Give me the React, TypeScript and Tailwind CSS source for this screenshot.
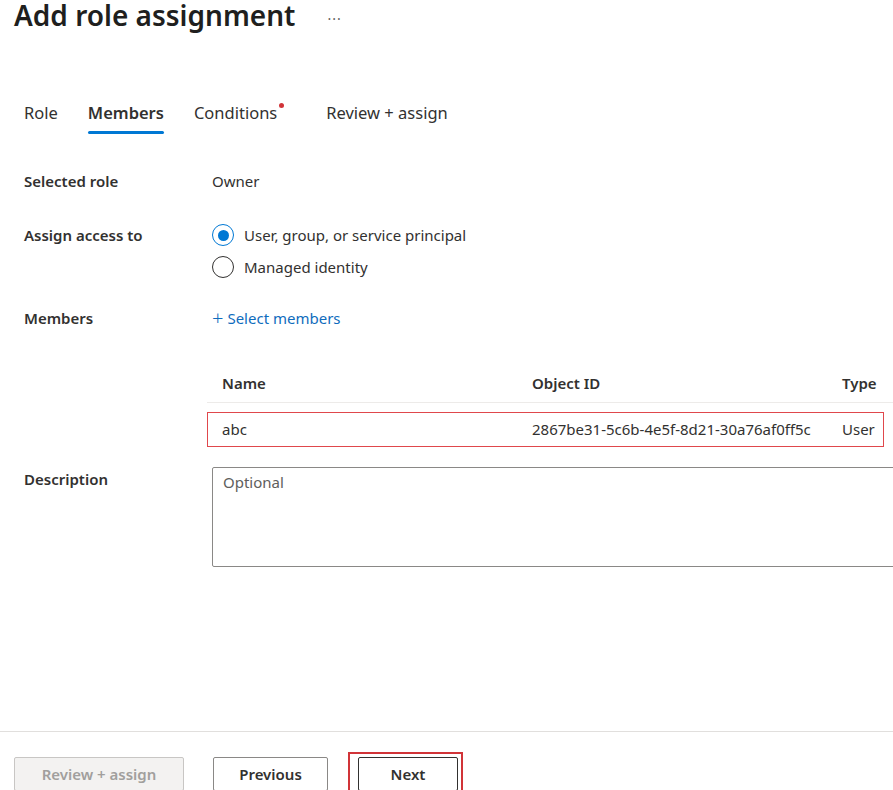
import React from "react";

const font = { fontFamily: '"Noto Sans", "Open Sans", sans-serif' };

function Radio({ checked, label }: { checked?: boolean; label: string }) {
  return (
    <div className="flex h-[32px] items-center gap-[10px]">
      <span
        className={`flex h-[22px] w-[22px] items-center justify-center rounded-full border ${
          checked ? "border-[#0078d4]" : "border-[#323130]"
        }`}
      >
        {checked && <span className="h-[11px] w-[11px] rounded-full bg-[#0078d4]" />}
      </span>
      <span className="text-[15px] text-[#323130]">{label}</span>
    </div>
  );
}

export default function App() {
  return (
    <div className="flex h-[790px] w-[893px] flex-col overflow-hidden bg-white text-[#323130]" style={font}>
      {/* header */}
      <div className="flex items-center pl-[14px]">
        <h1 className="text-[28px] font-semibold leading-[30px] text-[#201f1e]">Add role assignment</h1>
        <span className="ml-[32px] mt-[6px] text-[14px] tracking-[1px] text-[#605e5c]">···</span>
      </div>

      {/* tabs */}
      <div className="mt-[63px] flex h-[40px] items-center gap-[30px] pl-[24px] text-[16.5px]">
        <span>Role</span>
        <span className="relative font-semibold">
          Members
          <span className="absolute bottom-[-9px] left-0 h-[3px] w-full rounded bg-[#0078d4]" />
        </span>
        <span className="relative">
          Conditions
          <span className="absolute right-[-7px] top-[2px] h-[5px] w-[5px] rounded-full bg-[#d13438]" />
        </span>
        <span className="ml-[19px]">Review + assign</span>
      </div>

      {/* form */}
      <div className="mt-[33px] grid grid-cols-[188px_1fr] pl-[24px] text-[15px]">
        <div className="flex h-[30px] items-center font-semibold">Selected role</div>
        <div className="flex h-[30px] items-center">Owner</div>

        <div className="mt-[23px] flex h-[32px] items-center font-semibold">Assign access to</div>
        <div className="mt-[23px]">
          <Radio checked label="User, group, or service principal" />
          <Radio label="Managed identity" />
        </div>

        <div className="mt-[20px] flex h-[30px] items-center font-semibold">Members</div>
        <div className="mt-[20px] flex h-[30px] items-center text-[#0f6cbd]">
          <span className="mr-[4px] text-[20px] font-light leading-none">+</span>
          Select members
        </div>

        <div />
        <div className="mt-[32px] ml-[-5px]">
          <div className="flex h-[38px] items-center border-b border-[#edebe9] pl-[15px] text-[15px] font-semibold">
            <span className="w-[310px]">Name</span>
            <span className="w-[310px]">Object ID</span>
            <span>Type</span>
          </div>
          <div className="mt-[9px] flex h-[35px] w-[677px] items-center border border-[#e0474c] pl-[14px] text-[15px]">
            <span className="w-[310px]">abc</span>
            <span className="w-[310px]">2867be31-5c6b-4e5f-8d21-30a76af0ff5c</span>
            <span>User</span>
          </div>
        </div>

        <div className="mt-[20px] pt-[1px] font-semibold">Description</div>
        <div className="mt-[20px] mr-[-10px] h-[100px] rounded-[2px] border border-[#8a8886] px-[10px] pt-[3px] text-[#605e5c]">
          Optional
        </div>
      </div>

      {/* footer */}
      <div className="mt-auto mb-[-11px] border-t border-[#e1dfdd]">
        <div className="flex items-start pt-[20px] pl-[14px] text-[15px] font-semibold">
          <div className="mt-[5px] flex h-[34px] w-[170px] items-center justify-center rounded-[2px] border border-[#c8c6c4] bg-[#f3f2f1] text-[#a19f9d]">
            Review + assign
          </div>
          <div className="ml-[29px] mt-[5px] flex h-[34px] w-[115px] items-center justify-center rounded-[2px] border border-[#8a8886]">
            Previous
          </div>
          <div className="ml-[20px] border-2 border-[#d13438] pl-[8px] pr-[3px] pt-[3px] pb-[8px]">
            <div className="flex h-[34px] w-[100px] items-center justify-center rounded-[2px] border border-[#323130]">
              Next
            </div>
          </div>
        </div>
      </div>
    </div>
  );
}
